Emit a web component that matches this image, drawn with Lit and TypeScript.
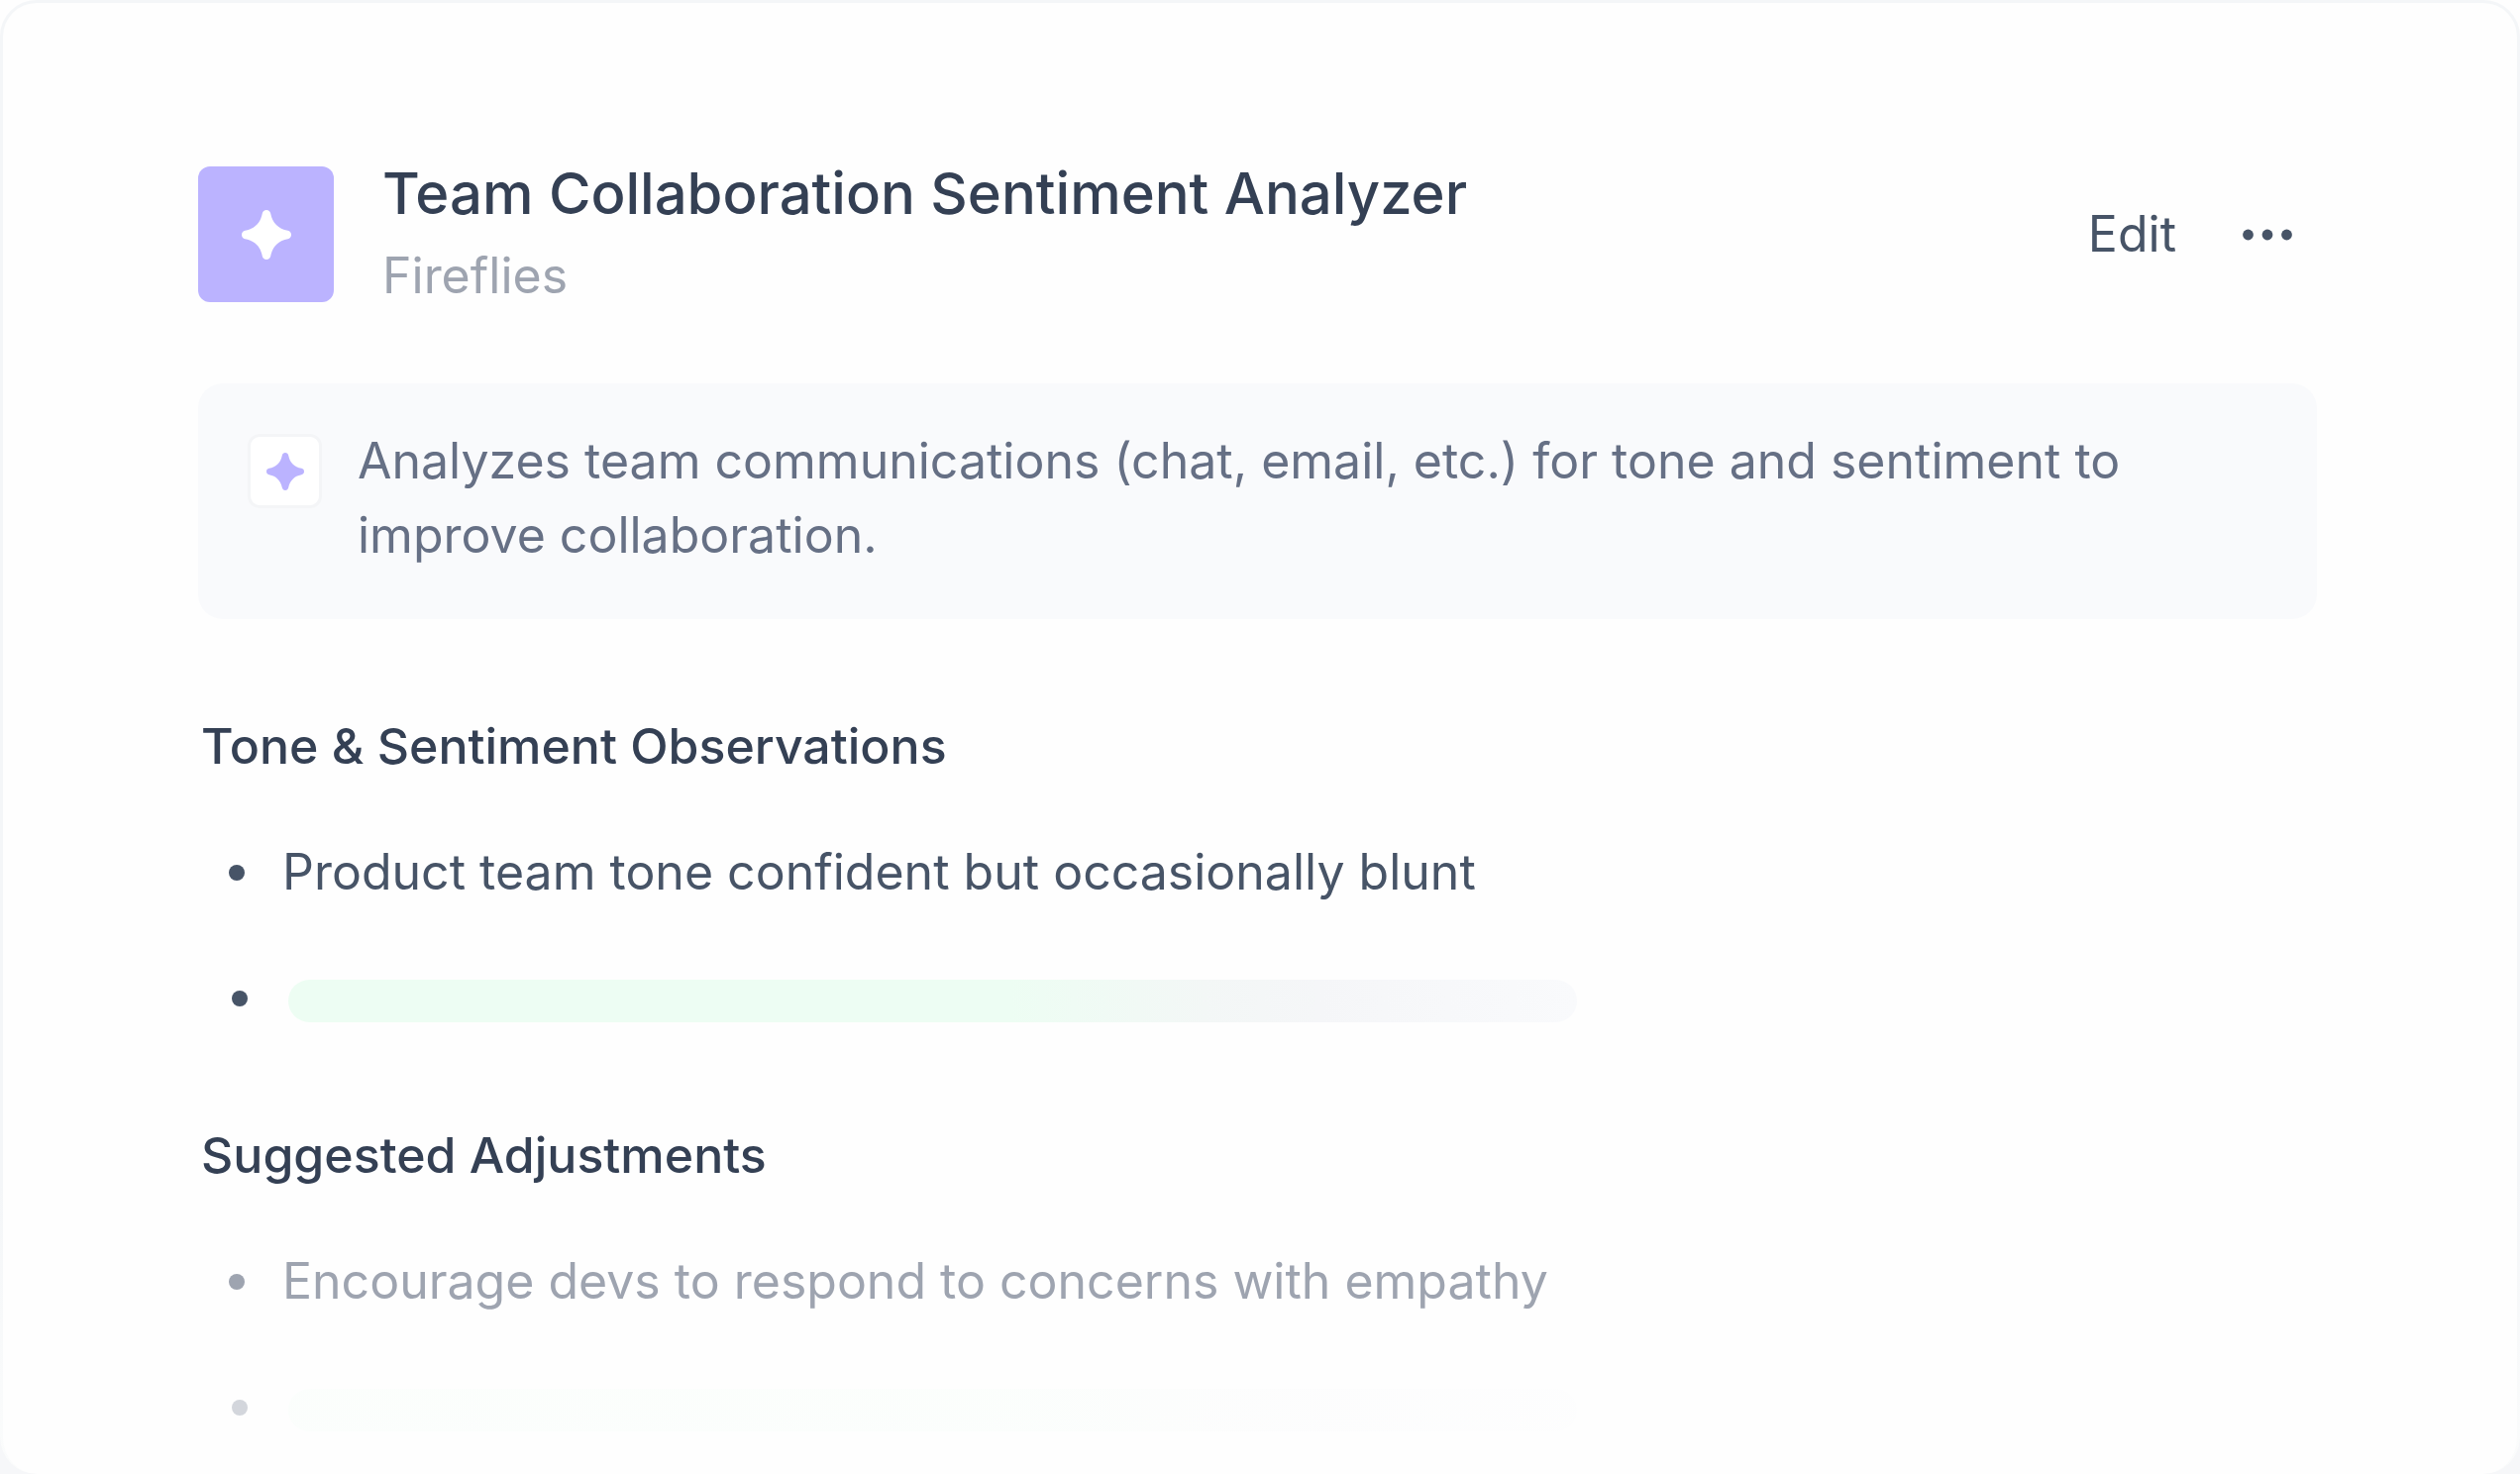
import { LitElement, html, css, svg } from "lit";
import { customElement, property } from "lit/decorators.js";

interface Section {
  title: string;
  item: string;
  faded: boolean;
}

const SECTIONS: Section[] = [
  { title: "Tone & Sentiment Observations", item: "Product team tone confident but occasionally blunt", faded: false },
  { title: "Suggested Adjustments", item: "Encourage devs to respond to concerns with empathy", faded: true },
];

const sparkle = svg`<path d="M25 0C27.200 0 28.700 1.300 29.200 3.500C31 13 37 19 46.500 20.800C48.700 21.300 50 22.800 50 25C50 27.200 48.700 28.700 46.500 29.200C37 31 31 37 29.200 46.500C28.700 48.700 27.200 50 25 50C22.800 50 21.300 48.700 20.800 46.500C19 37 13 31 3.500 29.200C1.300 28.700 0 27.200 0 25C0 22.800 1.300 21.300 3.500 20.800C13 19 19 13 20.800 3.500C21.300 1.300 22.800 0 25 0Z" fill="currentColor"/>`;

@customElement("note-section")
export class NoteSection extends LitElement {
  @property({ attribute: false }) section!: Section;

  static styles = css`
    :host { display: block; }
    .title {
      margin: 0 0 52px;
      padding-left: 3px;
      font-size: 50px;
      line-height: 75px;
      font-weight: 500;
      color: #344054;
    }
    .list {
      margin: 0;
      padding: 0 0 0 31px;
      list-style: none;
      display: flex;
      flex-direction: column;
      gap: 52px;
    }
    .item {
      display: flex;
      align-items: center;
      min-height: 75px;
      line-height: 75px;
      color: #475467;
    }
    .dot {
      flex: none;
      width: 16px;
      height: 16px;
      margin-right: 38px;
      border-radius: 50%;
      background: currentColor;
    }
    .placeholder { padding-left: 3px; }
    .bar {
      flex: 0 1 1301px;
      height: 43px;
      margin: 6px 0 0 3px;
      border-radius: 22px;
      background: linear-gradient(90deg, #edfdf3 0%, #edfdf3 56%, #f3f7f6 71%, #f5f6f8 80%, #f9fafc 100%);
    }
    .faded .item { color: #9ea4b0; }
    .faded .placeholder { color: #d3d6dc; }
    .faded .bar { opacity: 0.16; }
  `;

  render() {
    const { title, item, faded } = this.section;
    return html`
      <section class=${faded ? "faded" : ""}>
        <h2 class="title">${title}</h2>
        <ul class="list">
          <li class="item"><span class="dot"></span><span>${item}</span></li>
          <li class="item placeholder"><span class="dot"></span><span class="bar"></span></li>
        </ul>
      </section>
    `;
  }
}

@customElement("app-root")
export class AppRoot extends LitElement {
  static styles = css`
    :host {
      display: block;
      box-sizing: border-box;
      min-height: 100vh;
      font-family: Inter, "Liberation Sans", sans-serif;
      font-size: 50px;
      line-height: 75px;
      background: linear-gradient(#fefefe 50%, #f6f7f9 96%);
    }
    .card {
      box-sizing: border-box;
      min-height: 100vh;
      overflow: hidden;
      padding: 154px 202px 0 197px;
      border: 3px solid transparent;
      border-bottom: 0;
      border-radius: 37px;
      background:
        linear-gradient(#fefefe, #fefefe) padding-box,
        linear-gradient(#f4f6f8 80%, #fbfcfc) border-box;
    }
    .header {
      display: flex;
      align-items: center;
      margin-bottom: 71px;
    }
    .logo {
      flex: none;
      display: grid;
      place-items: center;
      width: 137px;
      height: 137px;
      margin: 10px 49px 10px 0;
      border-radius: 12px;
      background: #bbb3ff;
      color: #fff;
    }
    .names { flex: 1; min-width: 0; }
    .title {
      margin: 0 0 8px;
      font-size: 58px;
      line-height: 76px;
      font-weight: 500;
      color: #344054;
    }
    .source { margin: 0; color: #9ea4b0; }
    .actions {
      display: flex;
      align-items: center;
      gap: 57px;
      padding-right: 15px;
    }
    .btn {
      display: block;
      padding: 0;
      border: 0;
      background: none;
      font: inherit;
      color: #475467;
      cursor: pointer;
    }
    .more { padding: 10px; }
    .icon { display: block; }
    .callout {
      display: flex;
      align-items: flex-start;
      gap: 36px;
      padding: 41px 50px 47px;
      border-radius: 25px;
      background: #f9fafc;
      color: #667085;
    }
    .badge {
      flex: none;
      display: grid;
      place-items: center;
      box-sizing: border-box;
      width: 75px;
      height: 75px;
      margin-top: 10px;
      border: 3px solid #f4f5f7;
      border-radius: 12px;
      background: #fff;
      color: #bbb3ff;
    }
    .text { margin: 0; }
    .sections {
      display: flex;
      flex-direction: column;
      gap: 84px;
      margin-top: 91px;
    }
  `;

  render() {
    return html`
      <main class="card">
        <header class="header">
          <div class="logo"><svg class="icon" width="50" height="50" viewBox="0 0 50 50" aria-hidden="true">${sparkle}</svg></div>
          <div class="names">
            <h1 class="title">Team Collaboration Sentiment Analyzer</h1>
            <p class="source">Fireflies</p>
          </div>
          <div class="actions">
            <button class="btn" type="button">Edit</button>
            <button class="btn more" type="button" aria-label="More options">
              <svg class="icon" width="50" height="12" viewBox="0 0 50 12" fill="currentColor" aria-hidden="true">
                <circle cx="5.500" cy="6" r="5.400" /><circle cx="25" cy="6" r="5.400" /><circle cx="44.500" cy="6" r="5.400" />
              </svg>
            </button>
          </div>
        </header>
        <div class="callout">
          <div class="badge"><svg class="icon" width="38" height="38" viewBox="0 0 50 50" aria-hidden="true">${sparkle}</svg></div>
          <p class="text">Analyzes team communications (chat, email, etc.) for tone and sentiment to improve collaboration.</p>
        </div>
        <div class="sections">
          ${SECTIONS.map((s) => html`<note-section .section=${s}></note-section>`)}
        </div>
      </main>
    `;
  }
}
